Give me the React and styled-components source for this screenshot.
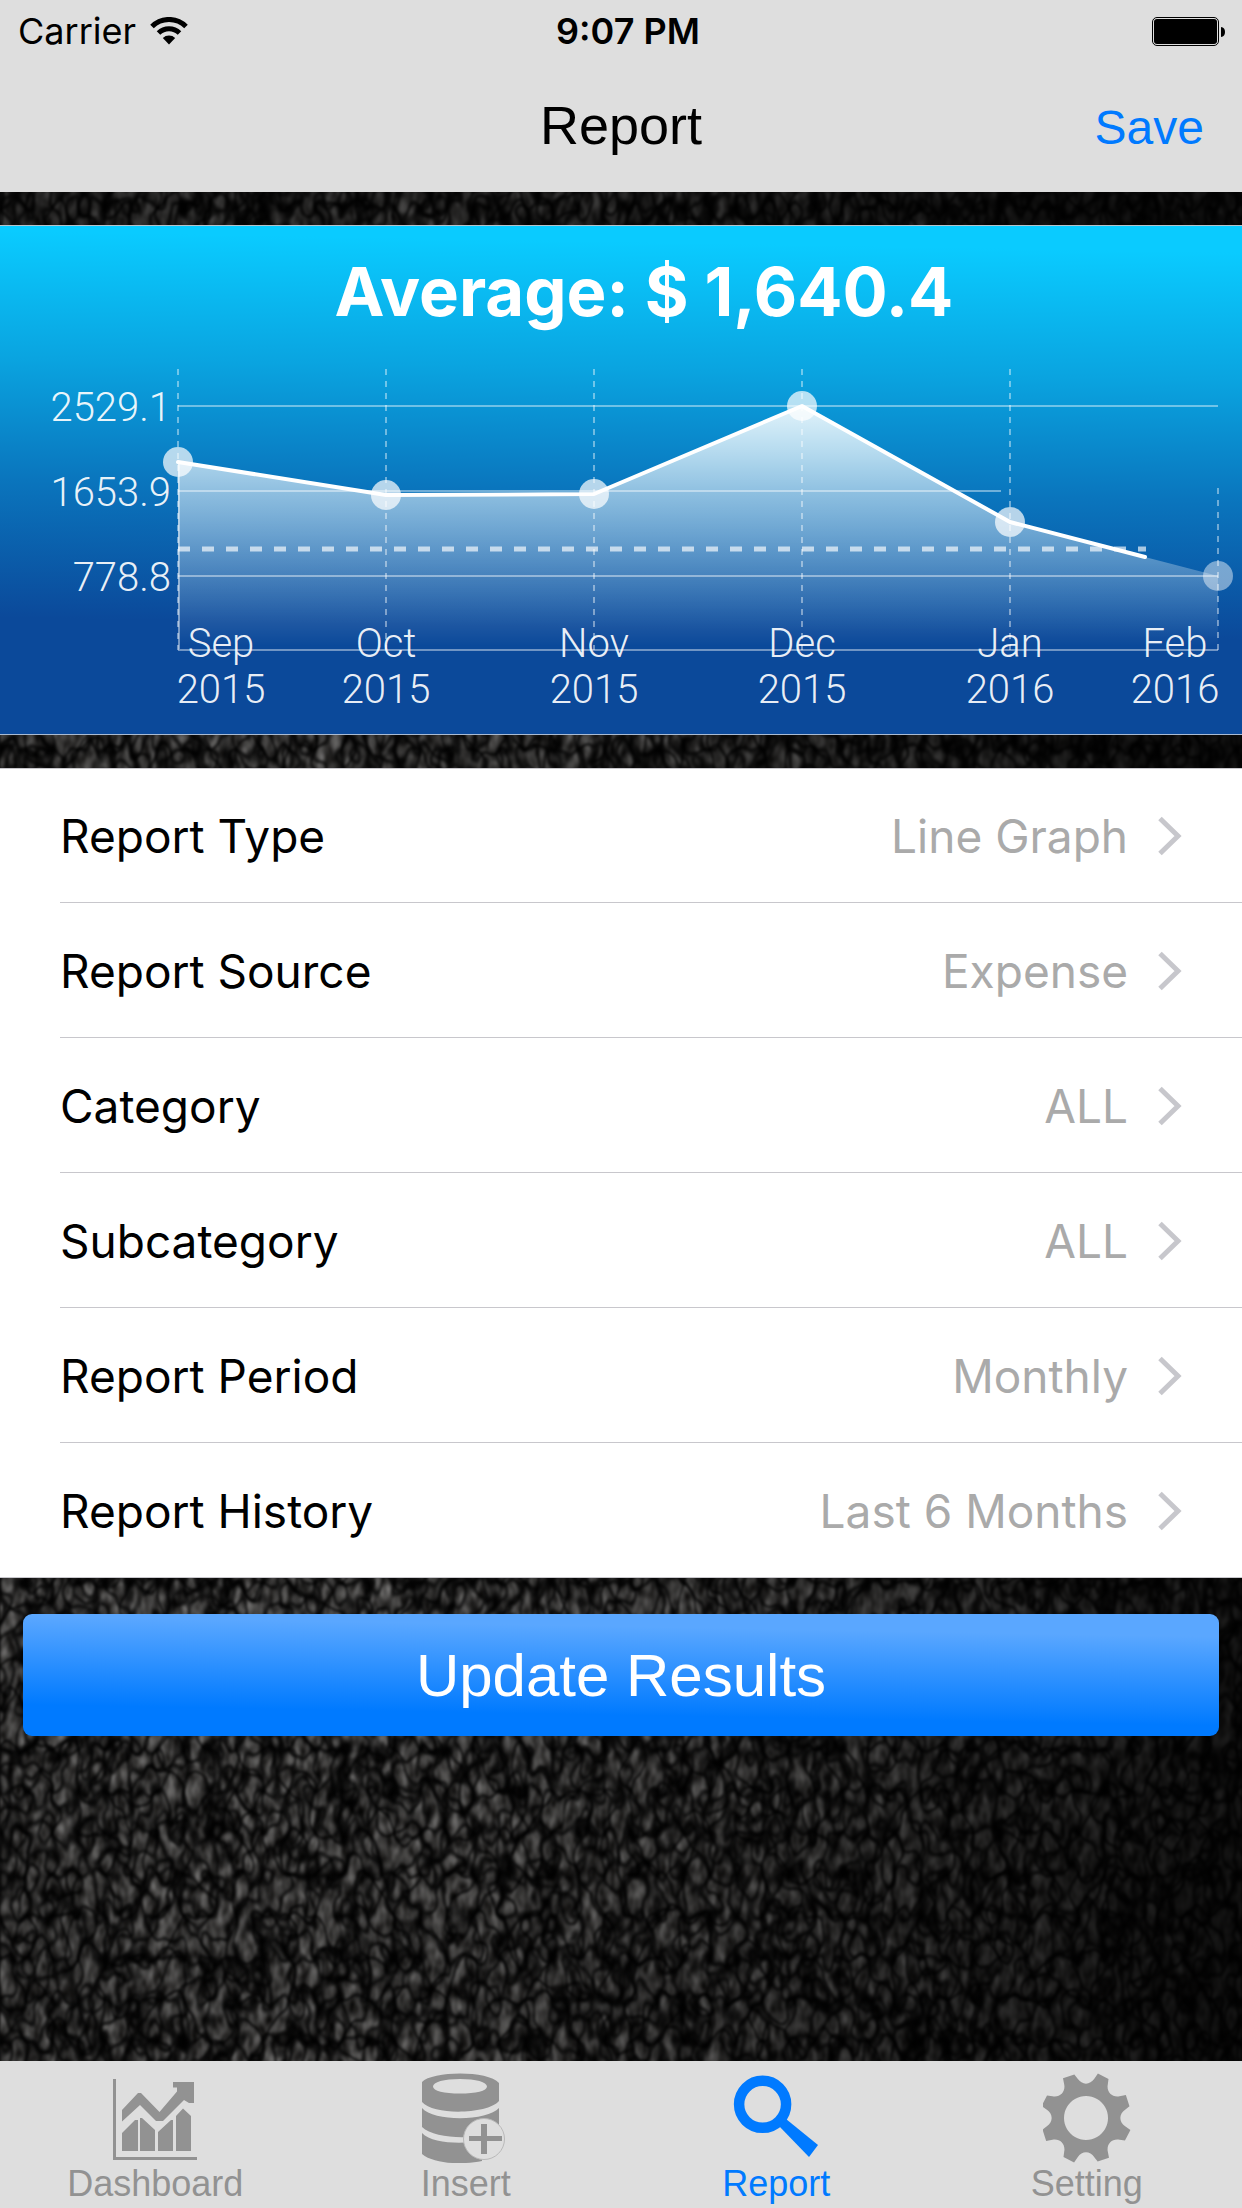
import React, { useState } from 'react';
import styled, { createGlobalStyle } from 'styled-components';

const GlobalStyle = createGlobalStyle`
    * {
        box-sizing: border-box;
    }
    body {
        margin: 0;
        background: #0b0a0a;
        font-family: "Liberation Sans", Helvetica, Arial, sans-serif;
    }
    button {
        border: 0;
        padding: 0;
        margin: 0;
        background: none;
        font: inherit;
        cursor: pointer;
    }
`;

const Screen = styled.div`
    position: relative;
    display: flex;
    flex-direction: column;
    min-height: 100vh;
    isolation: isolate;
`;

const LeatherBack = styled.svg`
    position: absolute;
    inset: 0;
    width: 100%;
    height: 100%;
    z-index: -1;
`;

const Header = styled.header`
    background: #dedede;
`;

const StatusBar = styled.div`
    display: grid;
    grid-template-columns: 1fr auto 1fr;
    align-items: center;
    height: 62px;
    padding: 0 16px 0 18px;
    font-family: Inter, "Liberation Sans", sans-serif;
    font-size: 36px;
`;

const Carrier = styled.div`
    display: flex;
    align-items: center;
    gap: 14px;
`;

const Clock = styled.time`
    padding-left: 12px;
    font-weight: 600;
`;

const BatteryIcon = styled.svg`
    justify-self: end;
`;

const NavBar = styled.div`
    display: grid;
    grid-template-columns: 1fr auto 1fr;
    align-items: baseline;
    height: 130px;
    padding: 31px 38px 0;
`;

const PageTitle = styled.h1`
    grid-column: 2;
    margin: 0;
    font-size: 54px;
    font-weight: 400;
    line-height: 64px;
`;

const SaveButton = styled.button`
    justify-self: end;
    color: #007aff;
    font-size: 48px;
`;

const Main = styled.main`
    display: flex;
    flex: 1;
    flex-direction: column;
    padding: 33px 0;
`;

const ChartPanel = styled.section`
    border-top: 1px solid #b5c3cb;
    border-bottom: 1px solid #a9bbd4;
    background: linear-gradient(181deg, #0acbff 5%, #0aa4e0 29%, #0a75bd 52%, #0b499a 78%);
`;

const ChartTitle = styled.h2`
    margin: 0;
    padding-left: 46px;
    color: #fff;
    font-family: Inter, "Liberation Sans", sans-serif;
    font-size: 67px;
    font-weight: 700;
    line-height: 132px;
    text-align: center;
`;

const ChartSvg = styled.svg`
    display: block;
    width: 100%;
    height: auto;
`;

const ChartText = styled.text`
    fill: #fff;
    fill-opacity: 0.92;
    font-family: Roboto, "Liberation Sans", sans-serif;
    font-size: 40px;
    font-weight: 300;
    text-anchor: ${(props) => props.$anchor || 'middle'};
`;

const OptionList = styled.ul`
    margin: 33px 0 36px;
    padding: 0;
    list-style: none;
    background: #fff;
    box-shadow: inset 0 1px #c8c7cc, inset 0 -1px #c8c7cc;
`;

const OptionItem = styled.li`
    padding-left: 60px;
`;

const OptionButton = styled.button`
    display: flex;
    align-items: center;
    width: 100%;
    height: 135px;
    padding-top: 2px;
    padding-right: 60px;
    border-bottom: 1px solid #c8c7cc;
    color: #000;
    font-family: Inter, "Liberation Sans", sans-serif;
    font-size: 46px;
    text-align: left;
`;

const OptionValue = styled.span`
    margin-left: auto;
    margin-right: 30px;
    color: #aaa;
`;

const UpdateButton = styled.button`
    height: 122px;
    margin: 0 23px;
    border-radius: 9px;
    background: linear-gradient(181deg, #5aa7ff 16%, #007aff 78%);
    color: #fff;
    font-size: 60px;
`;

const TabBar = styled.nav`
    display: grid;
    grid-template-columns: repeat(4, 1fr);
    height: 147px;
    background: #dedede;
`;

const TabLink = styled.a`
    display: flex;
    flex-direction: column;
    align-items: center;
    gap: 1px;
    padding-top: 12px;
    color: ${(props) => (props.$active ? '#007aff' : '#929292')};
    font-size: 36px;
    line-height: 40px;
    text-decoration: none;
`;

const TabIcon = styled.svg`
    width: 88px;
    height: 90px;
    fill: currentColor;
`;

const points = [
    { month: 'Sep', year: '2015', x: 178, y: 104, labelX: 221 },
    { month: 'Oct', year: '2015', x: 386, y: 137, labelX: 386 },
    { month: 'Nov', year: '2015', x: 594, y: 136, labelX: 594 },
    { month: 'Dec', year: '2015', x: 802, y: 48, labelX: 802 },
    { month: 'Jan', year: '2016', x: 1010, y: 164, labelX: 1010 },
    { month: 'Feb', year: '2016', x: 1218, y: 218, labelX: 1175 },
];

const levels = [
    { value: '2529.1', y: 48, end: 1218 },
    { value: '1653.9', y: 133, end: 1001 },
    { value: '778.8', y: 218, end: 1218 },
];

const options = [
    { label: 'Report Type', value: 'Line Graph' },
    { label: 'Report Source', value: 'Expense' },
    { label: 'Category', value: 'ALL' },
    { label: 'Subcategory', value: 'ALL' },
    { label: 'Report Period', value: 'Monthly' },
    { label: 'Report History', value: 'Last 6 Months' },
];

// noise crosses 0.5 along thin curves, those become the dark creases
const crease = '1 1 1 1 1 1 1 0.95 0.2 0.95 1 1 1 1 1 1 1';

function Leather() {
    return (
        <LeatherBack aria-hidden="true">
            <defs>
                <filter id="leather" x="0" y="0" width="100%" height="100%" colorInterpolationFilters="sRGB">
                    <feTurbulence type="fractalNoise" baseFrequency="0.038 0.024" numOctaves="2" seed="11" result="noise" />
                    <feComponentTransfer in="noise" result="creases">
                        <feFuncR type="table" tableValues={crease} />
                        <feFuncG type="table" tableValues={crease} />
                        <feFuncB type="table" tableValues={crease} />
                        <feFuncA type="linear" slope="0" intercept="1" />
                    </feComponentTransfer>
                    <feColorMatrix in="creases" values="1 0 0 0 0  1 0 0 0 0  1 0 0 0 0  0 0 0 0 1" result="c1" />
                    <feColorMatrix in="creases" values="0 1 0 0 0  0 1 0 0 0  0 1 0 0 0  0 0 0 0 1" result="c2" />
                    <feColorMatrix in="creases" values="0 0 1 0 0  0 0 1 0 0  0 0 1 0 0  0 0 0 0 1" result="c3" />
                    <feBlend in="c1" in2="c2" mode="multiply" result="c12" />
                    <feBlend in="c12" in2="c3" mode="multiply" result="cells" />
                    <feTurbulence type="fractalNoise" baseFrequency="0.12 0.06" numOctaves="2" seed="4" />
                    <feColorMatrix
                        values="0.7 0 0 0 -0.06  0.7 0 0 0 -0.065  0.7 0 0 0 -0.07  0 0 0 0 1"
                        result="grain"
                    />
                    <feBlend in="cells" in2="grain" mode="multiply" />
                    <feGaussianBlur stdDeviation="0.8" />
                </filter>
                <radialGradient id="shade" cx="0.22" cy="0.62" r="0.8">
                    <stop offset="0" stopColor="#000" stopOpacity="0" />
                    <stop offset="0.45" stopColor="#000" stopOpacity="0.25" />
                    <stop offset="1" stopColor="#000" stopOpacity="0.8" />
                </radialGradient>
            </defs>
            <rect width="100%" height="100%" filter="url(#leather)" />
            <rect width="100%" height="100%" fill="url(#shade)" />
        </LeatherBack>
    );
}

function LineChart() {
    const line = points.map((p) => `${p.x},${p.y}`).join(' ');

    return (
        <ChartSvg viewBox="0 0 1242 376" role="img" aria-label="Monthly expense">
            <defs>
                <linearGradient id="area" gradientUnits="userSpaceOnUse" x1="0" y1="48" x2="0" y2="288">
                    <stop offset="0" stopColor="#fff" stopOpacity="0.88" />
                    <stop offset="0.36" stopColor="#fff" stopOpacity="0.54" />
                    <stop offset="1" stopColor="#fff" stopOpacity="0" />
                </linearGradient>
            </defs>
            <polygon points={`178,292 ${line} 1218,292`} fill="url(#area)" />
            <g stroke="#fff" strokeOpacity="0.42" strokeWidth="2">
                {levels.map((level) => (
                    <line key={level.value} x1="178" y1={level.y} x2={level.end} y2={level.y} />
                ))}
                <polyline points="179,104 179,292 1218,292" fill="none" />
                {points.map((p) => (
                    <line key={p.x} x1={p.x} y1={p.x > 1200 ? 130 : 11} x2={p.x} y2="292" strokeDasharray="6 6" />
                ))}
            </g>
            <line x1="178" y1="191" x2="1146" y2="191" stroke="#fff" strokeOpacity="0.65" strokeWidth="5" strokeDasharray="12 12" />
            {points.map((p) => (
                <circle key={p.x} cx={p.x} cy={p.y} r="15" fill="#fff" fillOpacity={p.x > 1200 ? 0.45 : 0.7} />
            ))}
            <polyline
                points="178,104 386,137 594,136 802,48 1010,164 1145,199"
                fill="none"
                stroke="#fff"
                strokeWidth="4"
                strokeLinecap="round"
                strokeLinejoin="round"
            />
            {levels.map((level) => (
                <ChartText key={level.value} x="171" y={level.y + 15} $anchor="end">{level.value}</ChartText>
            ))}
            {points.map((p) => (
                <ChartText key={p.x} x={p.labelX} y="299">
                    {p.month}
                    <tspan x={p.labelX} y="345">{p.year}</tspan>
                </ChartText>
            ))}
        </ChartSvg>
    );
}

function WifiIcon() {
    return (
        <svg width="38" height="28" viewBox="0 0 38 28" fill="none" stroke="#000" strokeWidth="5" aria-hidden="true">
            <path d="M2 9.5 A24 24 0 0 1 36 9.5" />
            <path d="M8.5 16 A15 15 0 0 1 29.5 16" />
            <path d="M19 27.5 L12.8 21 A9 9 0 0 1 25.2 21 Z" fill="#000" stroke="none" />
        </svg>
    );
}

function Battery() {
    return (
        <BatteryIcon width="74" height="29" viewBox="0 0 74 29" aria-hidden="true">
            <rect x="0.5" y="0.5" width="66" height="28" rx="4.5" fill="none" stroke="#000" />
            <rect x="2" y="2" width="63" height="25" rx="3" />
            <path d="M69 10 Q73 10.5 73 15 Q73 19.5 69 20 Z" />
        </BatteryIcon>
    );
}

function Chevron() {
    return (
        <svg width="24" height="40" viewBox="0 0 24 40" fill="none" stroke="#c7c7cc" strokeWidth="5" aria-hidden="true">
            <path d="M2 2.5 L20 20 L2 37.5" />
        </svg>
    );
}

function DashboardIcon() {
    return (
        <TabIcon viewBox="0 0 88 90" aria-hidden="true">
            <path d="M2 6h3v78h81v3H2z" />
            <path d="M11 37L27 20h3L48.500 39L66 18.500V14.500H62V9H83V30H78L73 27L52 48H45L29 32L11 48.500z" />
            <path d="M11 60L24 47H27V78H11zM29 45H31L44 57V78H29zM47 59L60 47H62V78H47zM65 43L72 35.500L80 43V78H65z" />
        </TabIcon>
    );
}

function InsertIcon() {
    return (
        <TabIcon viewBox="0 0 88 90" aria-hidden="true">
            <path
                fillRule="evenodd"
                d="M0 9C10 -2 66 -3 77 10V28C66 41 12 43 0 29zM38 6C22 6 11 9 11 13.500S22 20.500 38 20.500S65 18 65 13.500S54 6 38 6z"
            />
            <path d="M0 35C12 49 66 48 77 35V57C64 66 14 68 0 54z" />
            <path d="M0 60C10 71 40 71 60 68V88C40 92 12 91 0 81z" />
            <circle cx="62" cy="66" r="20.500" fill="#dedede" stroke="#b9b9b9" strokeWidth="1" />
            <path d="M59 51h6v12h15v5H65v13h-6V68H47v-5h12z" />
        </TabIcon>
    );
}

function ReportIcon() {
    return (
        <TabIcon viewBox="0 0 88 90" aria-hidden="true">
            <circle cx="30.600" cy="31.300" r="23.500" fill="none" stroke="currentColor" strokeWidth="10.500" />
            <path d="M47 53L54 46L86 72L77 84z" />
        </TabIcon>
    );
}

function SettingIcon() {
    const at = (deg, r) => {
        const a = (deg * Math.PI) / 180;
        return `${(43 + r * Math.sin(a)).toFixed(2)} ${(45 - r * Math.cos(a)).toFixed(2)}`;
    };
    let d = `M${at(15, 46)}`;
    for (let i = 0; i < 8; i++) {
        const a = i * 45;
        d += `L${at(a + 30, 45)}L${at(a + 33, 40)}C${at(a + 38, 33)} ${at(a + 52, 33)} ${at(a + 57, 40)}L${at(a + 60, 46)}`;
    }
    d += 'ZM43 23a22 22 0 1 0 0.01 0Z';

    return (
        <TabIcon viewBox="0 0 88 90" aria-hidden="true">
            <path fillRule="evenodd" d={d} />
        </TabIcon>
    );
}

const tabs = [
    { name: 'Dashboard', Icon: DashboardIcon },
    { name: 'Insert', Icon: InsertIcon },
    { name: 'Report', Icon: ReportIcon },
    { name: 'Setting', Icon: SettingIcon },
];

const App = () => {
    const [activeTab, setActiveTab] = useState('Report');

    return (
        <Screen>
            <GlobalStyle />
            <Leather />
            <Header>
                <StatusBar>
                    <Carrier>
                        Carrier
                        <WifiIcon />
                    </Carrier>
                    <Clock>9:07 PM</Clock>
                    <Battery />
                </StatusBar>
                <NavBar>
                    <PageTitle>Report</PageTitle>
                    <SaveButton type="button">Save</SaveButton>
                </NavBar>
            </Header>
            <Main>
                <ChartPanel>
                    <ChartTitle>Average: $ 1,640.4</ChartTitle>
                    <LineChart />
                </ChartPanel>
                <OptionList>
                    {options.map((option) => (
                        <OptionItem key={option.label}>
                            <OptionButton type="button">
                                {option.label}
                                <OptionValue>{option.value}</OptionValue>
                                <Chevron />
                            </OptionButton>
                        </OptionItem>
                    ))}
                </OptionList>
                <UpdateButton type="button">Update Results</UpdateButton>
            </Main>
            <TabBar>
                {tabs.map(({ name, Icon }) => (
                    <TabLink
                        key={name}
                        href={`#${name.toLowerCase()}`}
                        $active={name === activeTab}
                        onClick={() => setActiveTab(name)}
                    >
                        <Icon />
                        {name}
                    </TabLink>
                ))}
            </TabBar>
        </Screen>
    );
};

export default App;
